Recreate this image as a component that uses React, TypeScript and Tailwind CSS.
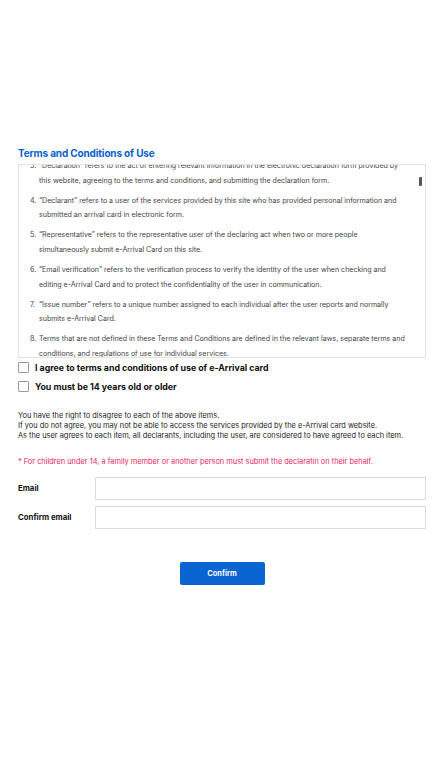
import React from "react";

const items: { n: number; t: string }[] = [
  {
    n: 3,
    t: "\u201CDeclaration\u201D refers to the act of entering relevant information in the electronic declaration form provided by this website, agreeing to the terms and conditions, and submitting the declaration form.",
  },
  {
    n: 4,
    t: "\u201CDeclarant\u201D refers to a user of the services provided by this site who has provided personal information and submitted an arrival card in electronic form.",
  },
  {
    n: 5,
    t: "\u201CRepresentative\u201D refers to the representative user of the declaring act when two or more people simultaneously submit e-Arrival Card on this site.",
  },
  {
    n: 6,
    t: "\u201CEmail verification\u201D refers to the verification process to verify the identity of the user when checking and editing e-Arrival Card and to protect the confidentiality of the user in communication.",
  },
  {
    n: 7,
    t: "\u201CIssue number\u201D refers to a unique number assigned to each individual after the user reports and normally submits e-Arrival Card.",
  },
  {
    n: 8,
    t: "Terms that are not defined in these Terms and Conditions are defined in the relevant laws, separate terms and conditions, and regulations of use for individual services.",
  },
];

export default function App() {
  return (
    <div
      className="w-[432px] min-h-[768px] bg-white text-[#222]"
      style={{ fontFamily: "Inter, 'Noto Sans', sans-serif" }}
    >
      <div className="pl-[18px] pr-[6px] pt-[146px]">
        <h2 className="text-[10px] font-bold text-[#0b5fcc] leading-[14px] tracking-[-0.15px]">
          Terms and Conditions of Use
        </h2>
        <div className="relative mt-[4px] h-[194px] w-[408px] overflow-hidden border border-[#e2e2e2]">
          <div className="mt-[-6px] pl-[11px] pr-[19px] text-[7.05px] leading-[14.6px] text-[#444]">
            {items.map((it) => (
              <div key={it.n} className="mb-[5.5px] flex">
                <span className="w-[8px] shrink-0">{it.n}.</span>
                <span className="pl-[1px]">{it.t}</span>
              </div>
            ))}
          </div>
          <div className="absolute right-[3px] top-[12px] h-[9px] w-[3px] rounded-[1px] bg-[#555]" />
        </div>

        <div className="mt-[4px] flex flex-col gap-[8px]">
          <label className="flex items-center gap-[6px]">
            <span className="h-[11px] w-[11px] rounded-[1px] border border-[#999] bg-white" />
            <span className="text-[8.8px] font-bold leading-[11px] text-[#111]">
              I agree to terms and conditions of use of e-Arrival card
            </span>
          </label>
          <label className="flex items-center gap-[6px]">
            <span className="h-[11px] w-[11px] rounded-[1px] border border-[#999] bg-white" />
            <span className="text-[8.8px] font-bold leading-[11px] text-[#111]">
              You must be 14 years old or older
            </span>
          </label>
        </div>

        <div className="mt-[19px] text-[7.4px] leading-[10px] text-[#222]">
          <p>You have the right to disagree to each of the above items.</p>
          <p>
            If you do not agree, you may not be able to access the services provided by the e-Arrival card website.
          </p>
          <p>
            As the user agrees to each item, all declarants, including the user, are considered to have agreed to each item.
          </p>
        </div>

        <p className="mt-[16px] text-[7.4px] leading-[10px] text-[#e8245f]">
          * For children under 14, a family member or another person must submit the declaratin on their behalf.
        </p>

        <div className="mt-[10px] flex flex-col gap-[6px]">
          <div className="flex items-center">
            <span className="w-[77px] text-[7.8px] font-bold text-[#111]">Email</span>
            <div className="h-[23px] flex-1 border border-[#dcdcdc] bg-white" />
          </div>
          <div className="flex items-center">
            <span className="w-[77px] text-[7.8px] font-bold text-[#111]">Confirm email</span>
            <div className="h-[23px] flex-1 border border-[#dcdcdc] bg-white" />
          </div>
        </div>

        <div className="mt-[33px] flex justify-center">
          <button className="h-[23px] w-[85px] rounded-[2px] bg-[#0a64d2] text-[7.4px] font-bold text-white">
            Confirm
          </button>
        </div>
      </div>
    </div>
  );
}
